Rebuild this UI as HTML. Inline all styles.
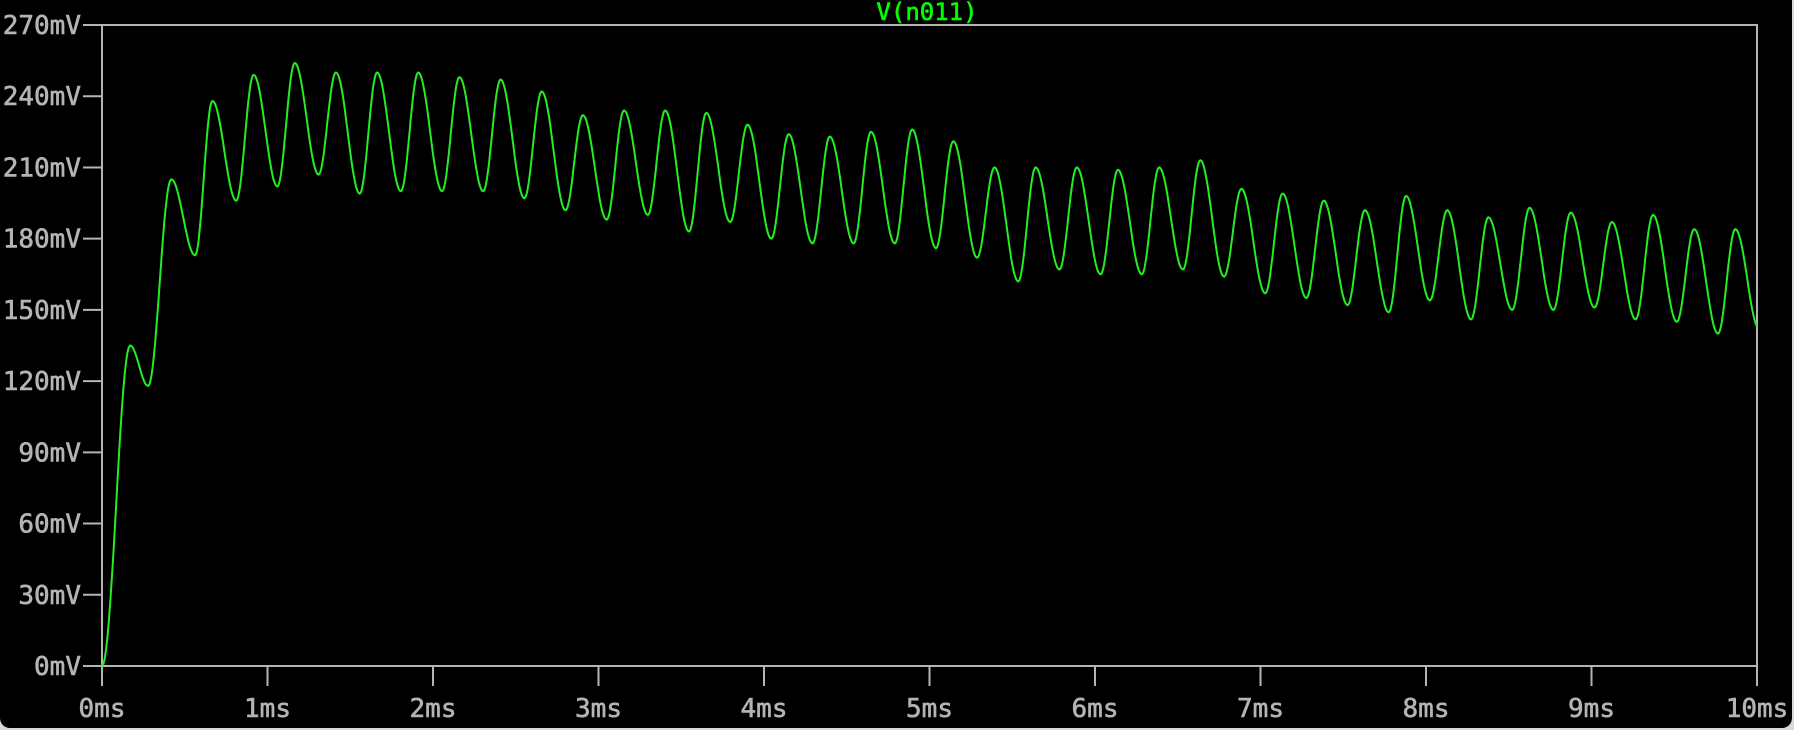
<!DOCTYPE html>
<html><head><style>
html,body{margin:0;padding:0;background:#d8d8d8;}
#w{position:relative;width:1792px;height:728px;background:#000;border-bottom-right-radius:10px;border-bottom-left-radius:10px;overflow:hidden;}
svg{position:absolute;left:0;top:0;}
text{font-family:"DejaVu Sans Mono","Liberation Mono",monospace;font-size:26px;fill:#b4b4b4;stroke:#b4b4b4;stroke-width:0.6px;}
</style></head><body>
<div id="w">
<svg id="s" width="1794" height="730" xmlns="http://www.w3.org/2000/svg">
<text x="927" y="20" text-anchor="middle" style="fill:#00ff00;stroke:#00ff00;font-size:24px">V(n011)</text>
<g id="ax" stroke="#b4b4b4" stroke-width="2" fill="none"></g>
<g id="lb"></g>
<path id="wave" fill="none" stroke="#22ee22" stroke-width="2"/>
</svg>
</div>
<script>
var L=102,R=1757,T=25,B=666;
function X(t){return L+(R-L)*t/10;}
function Y(v){return B-(B-T)*v/270;}
var ax=document.getElementById('ax'),lb=document.getElementById('lb'),ns='http://www.w3.org/2000/svg';
function el(p,tag,a,txt){var e=document.createElementNS(ns,tag);for(var k in a)e.setAttribute(k,a[k]);if(txt)e.textContent=txt;p.appendChild(e);}
el(ax,'rect',{x:L,y:T,width:R-L,height:B-T});
for(var i=0;i<=9;i++){var y=Y(i*30);el(ax,'line',{x1:83,y1:y,x2:L,y2:y});el(lb,'text',{x:81,y:y+9,'text-anchor':'end'},(i*30)+'mV');}
for(var i=0;i<=10;i++){var x=X(i);el(ax,'line',{x1:x,y1:B,x2:x,y2:686});el(lb,'text',{x:x,y:717,'text-anchor':'middle'},i+'ms');}
var P=[135,205,238,249,254,250,250,250,248,247,242,232,234,234,233,228,224,223,225,226,221,210,210,210,209,210,213,201,199,196,192,198,192,189,193,191,187,190,184,184];
var Tr=[118,173,196,202,207,199,200,200,200,197,192,188,190,183,187,180,178,178,178,176,172,162,167,165,165,167,164,157,155,152,149,154,146,150,150,151,146,145,140,142];
var ex=[[0,0]],per=0.2487,p0=0.17;
for(var k=0;k<40;k++){ex.push([p0+k*per,P[k]]);ex.push([p0+(k+1)*per-(k==0?0.14:0.105),Tr[k]]);}
var d='';
for(var j=0;j<ex.length-1;j++){var a=ex[j],b=ex[j+1];var n=20;for(var s=(j==0?0:1);s<=n;s++){var t=a[0]+(b[0]-a[0])*s/n;if(t>10)break;var v=a[1]+(b[1]-a[1])*(1-Math.cos(Math.PI*s/n))/2;d+=(d?'L':'M')+X(t).toFixed(1)+' '+Y(v).toFixed(1);}}
document.getElementById('wave').setAttribute('d',d);
</script>
</body></html>
